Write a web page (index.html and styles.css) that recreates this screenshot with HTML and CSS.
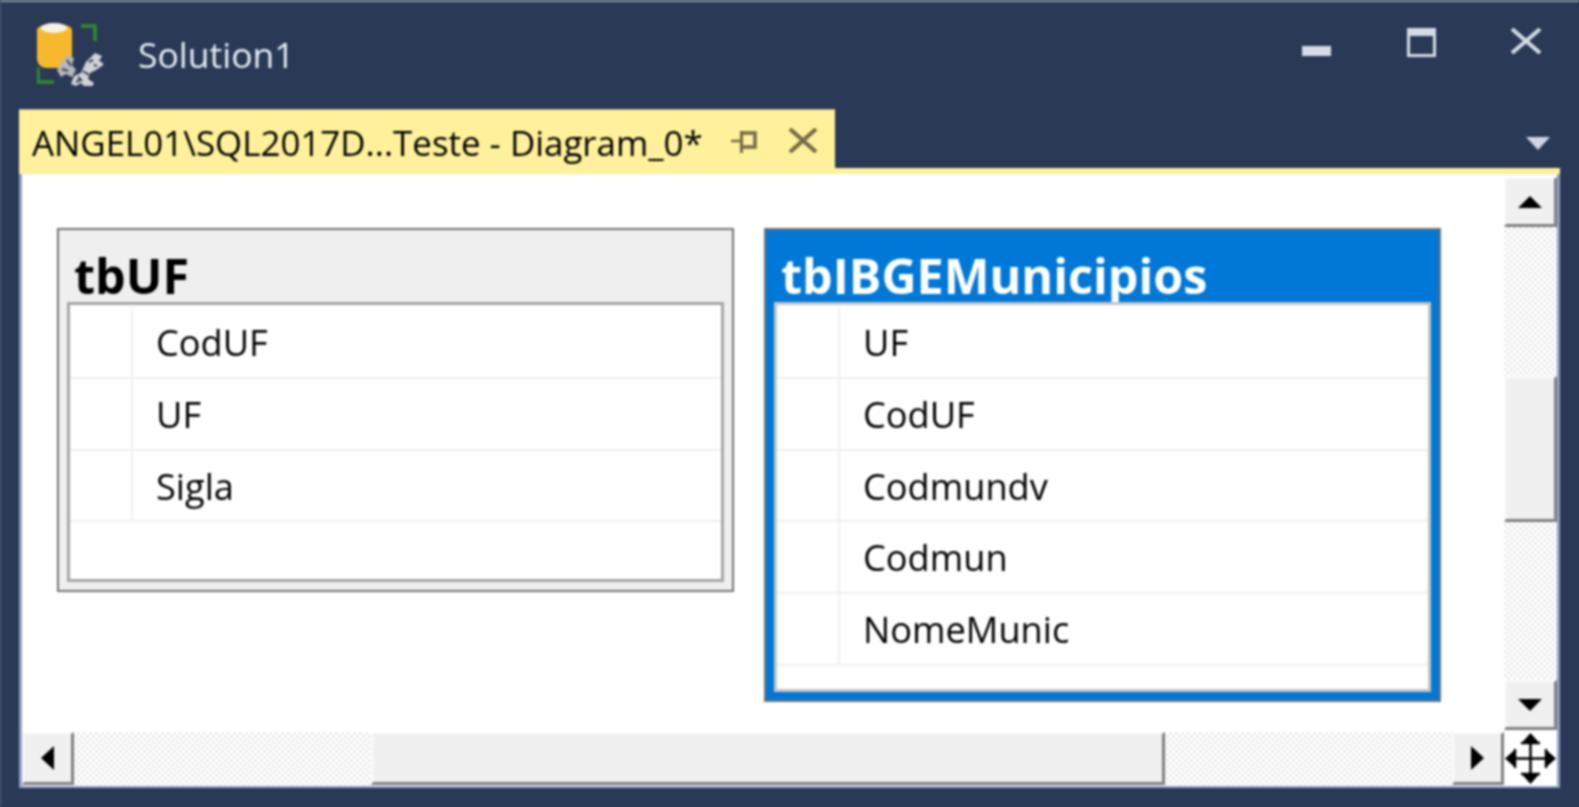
FILE: index.html
```html
<!DOCTYPE html>
<html lang="en">
<head>
<meta charset="utf-8">
<title>Solution1</title>
<link rel="stylesheet" href="styles.css">
</head>
<body>
<div class="window">
  <header class="titlebar">
    <svg class="app-icon" width="66" height="64" viewBox="0 0 66 64">
      <path d="M44 4h14v15" fill="none" stroke="#2f8a2f" stroke-width="3.500"/>
      <path d="M1 46v14h16" fill="none" stroke="#2f8a2f" stroke-width="3.500"/>
      <path d="M0 8c0-8 35-8 35 0v26l-8 12H10C4 46 0 42 0 36z" fill="#f6b92e"/>
      <ellipse cx="17" cy="6" rx="13" ry="5" fill="#f6f2e8"/>
      <path d="M20 48l10-15 7 3-2 7 4 5-4 7-6-3-5 3z" fill="#b4b8be"/>
      <path d="M30 38l4 6M25 47l6 2" stroke="#39414f" stroke-width="2" fill="none"/>
      <path d="M34 62l3-8 7-3 5-11 9-9 7 3-3 5 6 3-9 6-6 3-2 6 6 4-3 6-6-2-4-4-5 3z" fill="#d0d3d8"/>
      <path d="M46 49l6 4M41 55l4 4M52 40l4-2M39 60l4-2M57 43l3 1" stroke="#39414f" stroke-width="2" fill="none"/>
    </svg>
    <span class="app-name">Solution1</span>
    <div class="controls">
      <span class="ctl-min"></span>
      <span class="ctl-max"></span>
      <svg class="ctl-close" width="32" height="26" viewBox="0 0 32 26"><path d="M2 1l28 24M30 1L2 25" stroke="#d4dae6" stroke-width="4" fill="none"/></svg>
    </div>
  </header>
  <div class="tabstrip">
    <div class="tab">
      <span class="tab-label">ANGEL01\SQL2017D...Teste - Diagram_0*</span>
      <svg class="pin" width="26" height="22" viewBox="0 0 26 22"><path d="M0 10h10" fill="none" stroke="#75694a" stroke-width="2.500"/><path d="M10.500 0v22" fill="none" stroke="#75694a" stroke-width="3"/><path d="M10 2h14v14H10" fill="none" stroke="#75694a" stroke-width="3.500"/></svg>
      <svg class="tab-close" width="30" height="25" viewBox="0 0 30 25"><path d="M2 1l26 23M28 1L2 24" stroke="#75694a" stroke-width="4" fill="none"/></svg>
    </div>
    <span class="tab-menu"></span>
  </div>
  <div class="tabline"></div>
  <main class="panel">
    <section class="canvas">
      <article class="table">
        <h2 class="table-title">tbUF</h2>
        <div class="grid">
          <div class="row"><span class="sel"></span><span class="col">CodUF</span></div>
          <div class="row"><span class="sel"></span><span class="col">UF</span></div>
          <div class="row"><span class="sel"></span><span class="col">Sigla</span></div>
        </div>
      </article>
      <article class="table table-active">
        <h2 class="table-title">tbIBGEMunicipios</h2>
        <div class="grid">
          <div class="row"><span class="sel"></span><span class="col">UF</span></div>
          <div class="row"><span class="sel"></span><span class="col">CodUF</span></div>
          <div class="row"><span class="sel"></span><span class="col">Codmundv</span></div>
          <div class="row"><span class="sel"></span><span class="col">Codmun</span></div>
          <div class="row"><span class="sel"></span><span class="col">NomeMunic</span></div>
        </div>
      </article>
    </section>
    <aside class="vscroll">
      <div class="sbtn sbtn-v"><span class="arrow arrow-up"></span></div>
      <div class="track-v"><div class="thumb-v"></div></div>
      <div class="sbtn sbtn-v"><span class="arrow arrow-down"></span></div>
    </aside>
    <div class="hscroll">
      <div class="sbtn sbtn-h"><span class="arrow arrow-left"></span></div>
      <div class="track-h"><div class="thumb-h"></div></div>
      <div class="sbtn sbtn-h"><span class="arrow arrow-right"></span></div>
    </div>
    <div class="corner">
      <svg width="53" height="53" viewBox="0 0 53 53">
        <path d="M26.500 6v41M6 26.500h41" stroke="#000" stroke-width="2.500"/>
        <path d="M26.500 1l8 9h-16zM26.500 52l-8-9h16zM1 26.500l9-8v16zM52 26.500l-9 8v-16z" fill="#000"/>
        <path d="M17 11h19M17 42h19M11 17v19M42 17v19" stroke="#000" stroke-width="2.500"/>
      </svg>
    </div>
  </main>
</div>
</body>
</html>
```
FILE: styles.css
```css
* { box-sizing: border-box; }
html, body { margin: 0; padding: 0; background: #2a3a56; overflow: hidden; }
.window {
  width: 1579px; height: 807px; background: #2a3a56;
  border-top: 2px solid #8a94a3; border-left: 1px solid #5a6a84;
  display: flex; flex-direction: column;
  font-family: "Open Sans", "Noto Sans", sans-serif;
  filter: blur(0.9px); overflow: hidden;
}
.titlebar { height: 107px; flex: none; display: flex; align-items: flex-start; position: relative; padding-left: 36px; }
.app-icon { margin-top: 20px; flex: none; }
.app-name { margin: 29px 0 0 35px; font-size: 35.500px; line-height: 46px; color: #e6ecf5; }
.controls { margin-left: auto; display: flex; align-items: flex-start; padding: 26px 37px 0 0; }
.ctl-min { width: 29px; height: 10px; background: #d4dae6; margin-top: 18px; }
.ctl-max { width: 29px; height: 29px; border: 3px solid #d4dae6; border-top-width: 8px; margin-left: 76px; }
.ctl-close { margin-left: 74px; }
.tabstrip { height: 59px; flex: none; display: flex; padding-left: 18px; }
.tab {
  width: 816px; height: 59px; background: #fff09b; border-top: 1px solid #a9a686;
  display: flex; align-items: flex-start; padding-left: 13px;
}
.tab-label { font-size: 34.900px; line-height: 46px; margin-top: 10px; color: #000; white-space: nowrap; width: 699px; flex: none; }
.pin { margin-top: 21px; flex: none; }
.tab-close { margin: 18px 0 0 31px; flex: none; }
.tab-menu {
  width: 0; height: 0; margin: 28px 29px 0 auto;
  border-left: 12px solid transparent; border-right: 12px solid transparent; border-top: 13px solid #d0d6e4;
}
.tabline { height: 6px; flex: none; background: #fff09b; margin-left: 18px; width: 1541px; }
.panel {
  width: 1541px; height: 614px; margin-left: 18px; background: #fff; flex: none;
  border-left: 3px solid #8ea0c4; border-right: 3px solid #8ea0c4; border-bottom: 2px solid #8ea0c4;
  display: grid; grid-template-columns: 1fr 53px; grid-template-rows: 1fr 54px;
}
.canvas { display: flex; align-items: flex-start; gap: 30px; padding: 54px 0 0 35px; }
.table { width: 677px; border: 2px solid #737373; background: #efefef; padding: 0 8px 8px; flex: none; }
.table-title { margin: 0; height: 72px; padding: 16px 0 0 7px; font-size: 48.500px; line-height: 58px; font-weight: 700; color: #000; white-space: nowrap; }
.grid { position: relative; border: 3px solid #a6a6a6; background: #fff; height: 280px; overflow: hidden; padding-top: 2px; }
.row { height: 71.800px; border-bottom: 2px solid #f0f0f0; display: flex; }
.sel { width: 63px; border-right: 2px solid #f0f0f0; flex: none; }
.col { padding-left: 23px; font-size: 36.200px; line-height: 70px; color: #000; white-space: nowrap; }
.table-active { background: #0078d7; }
.table-active .table-title { color: #fff; }
.table-active .grid { height: 390px; border-color: #c4c4c4; }
.vscroll { display: flex; flex-direction: column; padding: 3px 0 2px 0; }
.sbtn { background: #f0f0f0; border-top: 2px solid #fbfbfb; border-left: 2px solid #fbfbfb; border-right: 3px solid #808080; border-bottom: 3px solid #808080; display: flex; align-items: center; justify-content: center; flex: none; }
.sbtn-v { width: 53px; height: 50px; }
.sbtn-h { width: 52px; height: 53px; }
.track-v { flex: 1; background: conic-gradient(#ececec 25%, #fff 0 50%, #ececec 0 75%, #fff 0) 0 0 / 6px 6px; padding-top: 149px; width: 53px; }
.thumb-v { height: 146px; background: #f0f0f0; border-top: 2px solid #fbfbfb; border-left: 2px solid #fbfbfb; border-right: 3px solid #808080; border-bottom: 3px solid #808080; }
.hscroll { display: flex; }
.track-h { flex: 1; background: conic-gradient(#ececec 25%, #fff 0 50%, #ececec 0 75%, #fff 0) 0 0 / 6px 6px; padding-left: 297px; height: 53px; }
.thumb-h { width: 794px; height: 53px; background: #f0f0f0; border-top: 2px solid #fbfbfb; border-left: 2px solid #fbfbfb; border-right: 3px solid #808080; border-bottom: 3px solid #808080; }
.corner { background: #fff; }
.corner svg { display: block; }
.arrow { width: 0; height: 0; display: block; }
.arrow-up { border-left: 12px solid transparent; border-right: 12px solid transparent; border-bottom: 12px solid #000; }
.arrow-down { border-left: 12px solid transparent; border-right: 12px solid transparent; border-top: 12px solid #000; }
.arrow-left { border-top: 12px solid transparent; border-bottom: 12px solid transparent; border-right: 13px solid #000; }
.arrow-right { border-top: 12px solid transparent; border-bottom: 12px solid transparent; border-left: 13px solid #000; }
```
